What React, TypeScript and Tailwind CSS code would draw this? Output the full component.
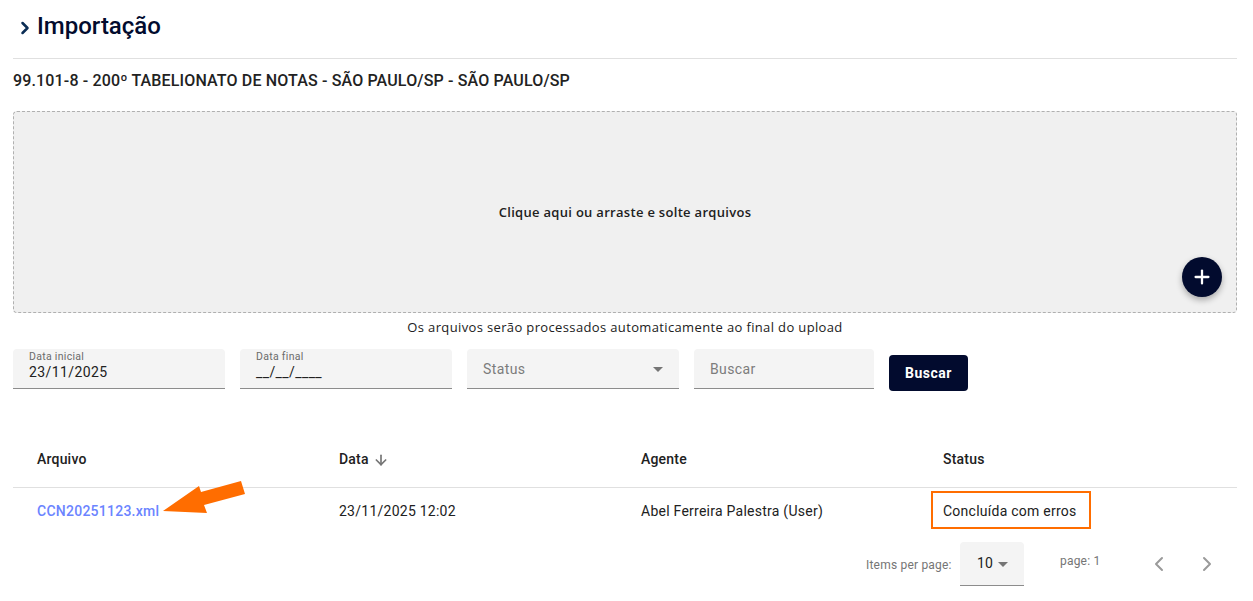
import { ArrowDown, ChevronLeft, ChevronRight, Plus } from 'lucide-react';

const Field = ({
  label,
  value,
  className,
  select,
}: {
  label: string;
  value?: string;
  className: string;
  select?: boolean;
}): JSX.Element => (
  <div
    className={`relative h-10 rounded-t bg-[#f4f4f4] border-b border-[#8c8c8c] px-4 ${className}`}
  >
    {value ? (
      <>
        <div className="pt-[1px] text-[10.5px] leading-[14px] tracking-[0.3px] text-[#6b6b6b]">
          {label}
        </div>
        <div className="text-sm leading-[16px] tracking-[0.4px] text-[#212121]">
          {value}
        </div>
      </>
    ) : (
      <div className="text-sm leading-10 tracking-[0.4px] text-[#7c7c7c]">
        {label}
      </div>
    )}
    {select && (
      <div className="absolute right-[16px] top-[18px] border-x-[5px] border-t-[5px] border-x-transparent border-t-[#757575]"></div>
    )}
  </div>
);

const columns = 'w-[302px] px-6';

const App = (): JSX.Element => {
  return (
    <div className="relative h-[601px] w-[1253px] overflow-hidden bg-white pl-[13px] pr-[16px] font-['Roboto',sans-serif] text-[#212121]">
      <div className="flex h-[59px] items-start border-b border-[#e0e0e0] pl-[2px] pt-[10px]">
        <ChevronRight
          className="mt-[8px] mr-[2px] h-[20px] w-[20px] text-[#0b2d55]"
          strokeWidth={3}
        />
        <h1 className="text-2xl leading-[32px] font-medium text-[#020b2e]">
          Importação
        </h1>
      </div>
      <div className="pt-[12px] text-base leading-[20px] font-medium tracking-[0.15px] text-[#222]">
        99.101-8 - 200º TABELIONATO DE NOTAS - SÃO PAULO/SP - SÃO PAULO/SP
      </div>
      <div className="relative mt-[20px] flex h-[202px] items-center justify-center rounded border border-dashed border-[#b0b0b0] bg-[#f0f0f0]">
        <span className="mt-[2px] font-['Open_Sans',sans-serif] text-[13px] font-semibold tracking-[0.3px] text-[#212121]">
          Clique aqui ou arraste e solte arquivos
        </span>
        <div className="absolute right-[14px] bottom-[15px] flex h-10 w-10 items-center justify-center rounded-full bg-[#020b2e] text-white shadow-[0_3px_6px_rgba(0,0,0,0.3)]">
          <Plus className="h-[22px] w-[22px]" strokeWidth={2.5} />
        </div>
      </div>
      <div className="h-[27px] pt-[5px] text-center font-['Open_Sans',sans-serif] text-[13px] leading-[18px] tracking-[0.36px] text-[#212121]">
        Os arquivos serão processados automaticamente ao final do upload
      </div>
      <div className="mt-[9px] flex items-start gap-[15px]">
        <Field label="Data inicial" value="23/11/2025" className="w-[212px]" />
        <Field label="Data final" value="__/__/____" className="w-[212px]" />
        <Field label="Status" className="w-[212px]" select />
        <Field label="Buscar" className="w-[180px]" />
        <button className="mt-[6px] h-9 w-[79px] rounded bg-[#020b2e] text-sm font-bold tracking-[0.5px] text-white">
          Buscar
        </button>
      </div>
      <div className="mt-[42px] flex h-[55px] items-center border-b border-[#e0e0e0] pb-[2px] text-sm font-medium tracking-[0.2px]">
        <div className={columns}>Arquivo</div>
        <div className={`${columns} flex items-center gap-[4px]`}>
          Data
          <ArrowDown className="mt-[2px] h-[16px] w-[16px] text-[#757575]" strokeWidth={2.5} />
        </div>
        <div className={columns}>Agente</div>
        <div className={columns}>Status</div>
      </div>
      <div className="flex h-[46px] items-center text-sm tracking-[0.25px]">
        <div className={`${columns} font-medium text-[#6b84ff]`}>CCN20251123.xml</div>
        <div className={columns}>23/11/2025 12:02</div>
        <div className={columns}>Abel Ferreira Palestra (User)</div>
        <div className={columns}>Concluída com erros</div>
      </div>
      <div className="absolute left-[931px] top-[491px] h-[38px] w-[160px] border-2 border-[#ff6d00]"></div>
      <svg className="absolute left-[160px] top-[478px]" width="90" height="40" viewBox="0 0 90 40">
        <polygon points="3,33 39,8 41,14 81,3 85,16 44,27 47,35" fill="#ff6d00" />
      </svg>
      <div className="mt-[8px] flex h-[44px] items-center text-xs tracking-[0.2px] text-[#757575]">
        <div className="ml-[853px] w-[94px] pt-[2px]">Items per page:</div>
        <div className="relative h-[44px] w-[64px] rounded-t bg-[#f4f4f4] border-b border-[#8c8c8c] pl-[17px] text-sm leading-[43px] text-[#212121]">
          10
          <div className="absolute left-[38px] top-[20px] border-x-[5px] border-t-[5px] border-x-transparent border-t-[#757575]"></div>
        </div>
        <div className="ml-[36px] w-[60px] pb-[7px]">page: 1</div>
        <ChevronLeft className="ml-[27px] h-6 w-6 text-[#9a9a9a]" strokeWidth={2} />
        <ChevronRight className="ml-[24px] h-6 w-6 text-[#9a9a9a]" strokeWidth={2} />
      </div>
    </div>
  );
};

export default App;
